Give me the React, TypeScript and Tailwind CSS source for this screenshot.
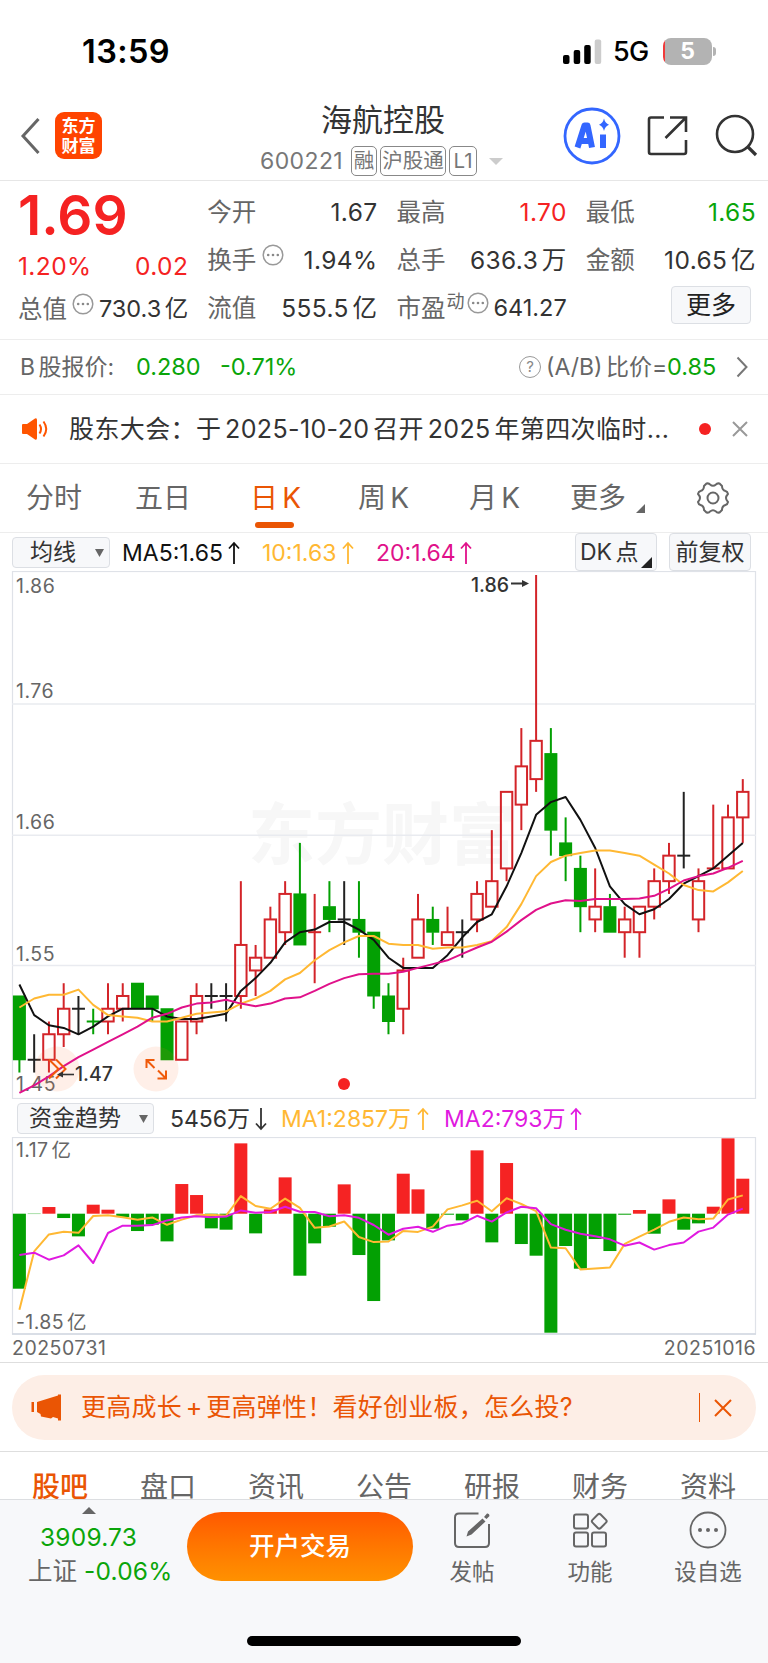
import { Fragment, type ReactNode } from 'react';
import clsx from 'clsx';

type Candle = [open: number, close: number, high: number, low: number, doji?: 'flat' | 'up' | 'down'];

// prices in cents
const candles: Candle[] = [
  [153, 148, 153, 147], [148, 148, 150, 147, 'flat'], [148, 150, 151, 147], [150, 152, 154, 149],
  [152, 152, 153, 150, 'flat'], [151, 151, 152, 150, 'down'], [151, 152, 154, 150], [152, 153, 154, 151],
  [154, 152, 154, 152], [153, 152, 153, 151], [152, 148, 152, 148], [148, 151, 151, 148],
  [151, 153, 154, 150], [153, 153, 154, 152, 'flat'], [153, 153, 154, 151, 'flat'], [153, 157, 162, 152],
  [155, 156, 157, 153], [156, 159, 160, 156], [158, 161, 162, 157], [161, 157, 165, 157],
  [158, 158, 161, 154, 'up'], [160, 159, 162, 158], [159, 159, 162, 157, 'flat'], [159, 158, 162, 156],
  [158, 153, 158, 152], [153, 151, 154, 150], [152, 155, 156, 150], [156, 159, 161, 156],
  [159, 158, 160, 157], [157, 158, 160, 157], [158, 158, 159, 156, 'flat'], [159, 161, 162, 158],
  [160, 162, 166, 160], [163, 169, 169, 162], [168, 171, 174, 166], [170, 173, 186, 169],
  [172, 166, 174, 164], [165, 164, 167, 162], [163, 160, 164, 158], [159, 160, 163, 158],
  [160, 158, 161, 158], [158, 159, 160, 156], [158, 160, 160, 156], [160, 162, 163, 159],
  [162, 164, 165, 161], [164, 164, 169, 163, 'flat'], [159, 162, 163, 158], [163, 163, 168, 163, 'up'],
  [163, 167, 168, 163], [167, 169, 170, 165],
];

// net inflow per day, one unit = 52万
const flows = [
  -225, -1, 20, -13, -68, 27, 12, -10, -52, -33, -83, 89, 56, -44, -48, 211, -59, 13, 109, -186,
  -89, -39, 88, -124, -262, -80, 120, 73, -45, -3, -20, 190, -86, 152, -91, -126, -357, -97, -165, -76,
  -112, -3, 11, -60, 43, -48, -29, 21, 226, 105,
];

// the averages need values from before the first visible day, so each starts with a seed
const ma5Seed = [153.9, 151.5, 150.7, 150.5];
const ma10Seed = [152.1, 152.8, 153.1, 153.1, 153.5, 152.3, 151.5, 151.4, 151.3];
const ma20Seed = [
  145.4, 146, 146.7, 147.5, 148.2, 148.8, 149.4, 150, 150.6, 151.3, 151.6, 152.1, 152.4, 152.5, 152.7,
  152.4, 152.2, 152.4, 152.8,
];
const flow5Seed = [-288, -113, -62, -54];
const flow10Seed = [-124, -117, -138, -125, -95, -148, -58, -36, -36];

const average = (values: number[], seed: number[]) => {
  const n = seed.length + 1;
  return values.map((_, i) =>
    i < seed.length ? seed[i] : values.slice(i - n + 1, i + 1).reduce((a, b) => a + b, 0) / n,
  );
};

const xAt = (i: number) => 19.4 + i * 14.763;
const priceY = (p: number) => 4 + (186 - p) * 12.757;
const flowY = (v: number) => 76.7 - v / 3;
const toPoints = (values: number[], y: (v: number) => number) =>
  values.map((v, i) => `${xAt(i).toFixed(1)},${y(v).toFixed(1)}`).join(' ');

const closes = candles.map((c) => c[1]);

// puts a small gap between Chinese and Latin runs
const Mixed = ({ text }: { text: string }) => (
  <>
    {text.split(/(?<=[\u4e00-\u9fa5])(?=[\w+(])|(?<=[\w+)])(?=[\u4e00-\u9fa5])/).map((run, i) => (
      <Fragment key={i}>{i === 0 ? run : <span className="ml-[0.15em]">{run}</span>}</Fragment>
    ))}
  </>
);

const Line = ({ points, color }: { points: string; color: string }) => (
  <polyline points={points} fill="none" stroke={color} strokeWidth="2" strokeLinejoin="round" />
);

function CandleShape({ candle, index }: { candle: Candle; index: number }) {
  const [open, close, high, low, doji] = candle;
  const x = xAt(index);
  const top = priceY(Math.max(open, close));
  const bottom = priceY(Math.min(open, close));
  const color =
    doji === 'flat' ? '#222' : doji === 'down' || (!doji && close < open) ? '#03a003' : '#d32429';

  if (doji) {
    return (
      <g stroke={color} strokeWidth="2">
        <line x1={x} x2={x} y1={priceY(high)} y2={priceY(low)} />
        <line x1={x - 6.5} x2={x + 6.5} y1={top} y2={top} />
      </g>
    );
  }
  return (
    <g stroke={color} strokeWidth="2">
      <line x1={x} x2={x} y1={priceY(high)} y2={top} />
      <line x1={x} x2={x} y1={bottom} y2={priceY(low)} />
      {close < open ? (
        <rect x={x - 6.5} y={top - 0.5} width="13" height={bottom - top + 1} fill={color} stroke="none" />
      ) : (
        <rect x={x - 5.7} y={top} width="11.4" height={bottom - top} fill="none" />
      )}
    </g>
  );
}

function KChart() {
  return (
    <svg width="768" height="528" viewBox="0 0 768 528" className="block shrink-0">
      <text x="248" y="288" fontSize="67" fontWeight="700" fill="#f7f7f7">东方财富</text>
      <g stroke="#e9ebf0" strokeWidth="1.6">
        <rect x="12.5" y="0.5" width="743" height="527" fill="none" strokeWidth="1.2" stroke="#dfe2e8" />
        <path d="M12 133H756M12 264.2H756M12 394.5H756" />
      </g>
      {candles.map((c, i) => <CandleShape key={i} candle={c} index={i} />)}
      <g fontSize="19.5" fill="#666" letterSpacing="0.5">
        <text x="16" y="22">1.86</text>
        <text x="16" y="126.5">1.76</text>
        <text x="16" y="258">1.66</text>
        <text x="16" y="389.5">1.55</text>
        <text x="16" y="520">1.45</text>
      </g>
      <circle cx="57" cy="498" r="22.5" fill="#ff6a2a" fillOpacity="0.11" />
      <circle cx="156" cy="498" r="22.5" fill="#ff6a2a" fillOpacity="0.11" />
      <Line points={toPoints(average(closes, ma5Seed), priceY)} color="#111" />
      <Line points={toPoints(average(closes, ma10Seed), priceY)} color="#ffb833" />
      <Line points={toPoints(average(closes, ma20Seed), priceY)} color="#e0118a" />
      <g fill="none" stroke="#f05a0a" strokeWidth="2">
        <path d="M49 488.5L58.5 498L49 507.5M56 488.5L65.5 498L56 507.5" />
        <path d="M146.5 497V489H154.5M147 489.5L154.5 497M157.5 507.5H166V499.5M165.5 507L158 499.5" />
      </g>
      <g stroke="#333" strokeWidth="1.6" fill="#333">
        <path d="M59 503.5H74" />
        <path d="M57 503.5L63 500.5V506.5Z" stroke="none" />
        <path d="M511 12.5H524" strokeWidth="2" />
        <path d="M529 12.5L522 9V16Z" stroke="none" />
      </g>
      <g fontSize="19.5" fontWeight="500" fill="#333">
        <text x="75" y="510">1.47</text>
        <text x="471" y="20.5">1.86</text>
      </g>
      <circle cx="344" cy="513" r="6" fill="#f52222" />
    </svg>
  );
}

function FlowChart() {
  return (
    <svg width="768" height="198" viewBox="0 0 768 198" className="block shrink-0">
      <rect x="12.5" y="0.5" width="743" height="196.5" fill="none" stroke="#dfe2e8" strokeWidth="1.2" />
      <path d="M12 197H756" stroke="#d3d8e2" strokeWidth="1.5" />
      {flows.map((v, i) => (
        <rect
          key={i}
          x={xAt(i) - 6.5}
          y={Math.min(flowY(0), flowY(v))}
          width="13"
          height={Math.abs(v) / 3}
          fill={v > 0 ? '#f52323' : '#03a003'}
        />
      ))}
      <Line points={toPoints(average(flows, flow5Seed), flowY)} color="#ffb833" />
      <Line points={toPoints(average(flows, flow10Seed), flowY)} color="#e019e0" />
      <g fontSize="19.5" fill="#666" letterSpacing="0.4">
        <text x="16" y="20">1.17<tspan dx="3">亿</tspan></text>
        <text x="16" y="192">-1.85<tspan dx="3">亿</tspan></text>
      </g>
    </svg>
  );
}

const Arrow = ({ down = false }: { down?: boolean }) => (
  <svg width="12" height="24" viewBox="0 0 12 24" fill="none" stroke="currentColor" strokeWidth="1.8" className={clsx('shrink-0', down && 'rotate-180')}>
    <path d="M6 23V2M1 7.5L6 2L11 7.5" />
  </svg>
);

const Dots = ({ className }: { className?: string }) => (
  <svg width="22" height="22" viewBox="0 0 22 22" className={clsx('shrink-0', className)}>
    <circle cx="11" cy="11" r="9.8" fill="none" stroke="#999" strokeWidth="1.5" />
    <g fill="#888">
      <circle cx="6.2" cy="11" r="1.3" />
      <circle cx="11" cy="11" r="1.3" />
      <circle cx="15.8" cy="11" r="1.3" />
    </g>
  </svg>
);

function StatusBar() {
  return (
    <div className="flex h-[103px] shrink-0 items-center pr-[52px] pl-[82px] text-black">
      <span className="mt-[2px] text-[32.5px] font-semibold tracking-[0.4px]">13:59</span>
      <svg width="40" height="26" viewBox="0 0 40 26" className="ml-auto">
        <rect x="0" y="16" width="6.5" height="9" rx="2" />
        <rect x="10.7" y="11" width="6.5" height="14" rx="2" />
        <rect x="21.2" y="6" width="6.5" height="19" rx="2" />
        <rect x="31.7" y="0.5" width="6.5" height="24.5" rx="2" fill="#ccc" />
      </svg>
      <span className="mt-[2px] ml-[10px] w-[38px] text-[27px] font-medium tracking-[-0.8px]">5G</span>
      <div className="ml-[12px] flex h-[27px] w-[49px] items-center justify-center rounded-[8px] bg-[linear-gradient(90deg,#f03a3a_2.5px,#b3b3b3_2.5px)] text-[23px] font-bold text-white">5</div>
      <div className="ml-[1px] h-[9px] w-[3px] rounded-r-full bg-[#b3b3b3]" />
    </div>
  );
}

const Tag = ({ children, className }: { children: ReactNode; className: string }) => (
  <span className={clsx('flex h-[30px] shrink-0 items-center justify-center rounded-[5px] border-[1.5px] border-[#888] text-[20.5px]', className)}>
    {children}
  </span>
);

function Header() {
  return (
    <header className="flex h-[78px] shrink-0 border-b border-[#e6e6e6]">
      <svg width="20" height="38" viewBox="0 0 20 38" fill="none" stroke="#666" strokeWidth="3" className="mt-[14px] ml-[20px]">
        <path d="M18.5 2L3 19L18.5 36" />
      </svg>
      <div className="mt-[9px] ml-[15px] flex h-[47px] w-[47px] flex-col items-center justify-center rounded-[9px] bg-[#ff4400] text-[17px] leading-[20px] font-bold text-white">
        <span>东方</span>
        <span>财富</span>
      </div>
      <div className="ml-[158px] flex w-[246px] flex-col">
        <span className="mt-[-3px] pl-[61px] text-[31px] leading-[40px] text-[#333]">海航控股</span>
        <div className="mt-[4px] flex items-center text-[#777]">
          <span className="w-[91px] shrink-0 text-[23px] tracking-[0.4px]">600221</span>
          <Tag className="w-[26px]">融</Tag>
          <Tag className="ml-[3px] w-[66px]">沪股通</Tag>
          <Tag className="ml-[3px] w-[28px]">L1</Tag>
          <svg width="14" height="7" className="ml-[12px] shrink-0" fill="#ccc"><path d="M0 0H14L7 7Z" /></svg>
        </div>
      </div>
      <svg width="60" height="60" viewBox="0 0 60 60" className="mt-[3px] ml-[56px]">
        <circle cx="30" cy="30" r="27" fill="none" stroke="#3366ff" strokeWidth="2.8" />
        <g fill="none" stroke="#3366ff" strokeWidth="6" strokeLinejoin="round">
          <path d="M15.5 41.5L22.5 19.5H25.5L30 41.5M19.5 35H28" />
          <path d="M41 28.5V42" />
        </g>
        <path d="M42 12.5Q43.2 17.5 47 18.7Q43.2 20 42 25Q40.8 20 37 18.7Q40.8 17.5 42 12.5Z" fill="#3366ff" />
      </svg>
      <svg width="42" height="42" viewBox="0 0 42 42" fill="none" stroke="#333" strokeWidth="2.6" className="mt-[12px] ml-[24px]">
        <path d="M18 2.5H5Q3 2.5 3 4.5V37Q3 39 5 39H38Q40 39 40 37V25M24 2.5H40V17M40 2.5L19.5 23" />
      </svg>
      <svg width="44" height="44" viewBox="0 0 44 44" fill="none" stroke="#333" strokeWidth="2.6" className="mt-[11px] ml-[27px]">
        <circle cx="20" cy="20" r="18" />
        <path d="M33 33L41 41" strokeWidth="3.2" />
      </svg>
    </header>
  );
}

const Cell = ({ label, value, color, note }: { label: string; value: string; color?: string; note?: ReactNode }) => (
  <div className="flex h-[48px] items-center">
    <span className="shrink-0 text-[24.5px] text-[#666]">{label}</span>
    {note}
    <span className={clsx('mr-[-1px] ml-auto whitespace-nowrap', note && !value.includes('%') ? 'text-[23.5px]' : 'text-[24.5px] tracking-[0.4px]', color)}>
      <Mixed text={value} />
    </span>
  </div>
);

function Quote() {
  return (
    <section className="grid h-[159px] shrink-0 grid-cols-4 gap-x-[20px] border-b border-[#ededed] pt-[7px] pr-[13px] pl-[18px] text-[#333]">
      <div>
        <div className="h-[54px] text-[55px] leading-[55px] font-semibold text-[#f52222]">1.69</div>
        <div className="mr-[-1px] flex h-[43px] items-end justify-between text-[24.5px] tracking-[0.4px] text-[#f52222]">
          <span>1.20%</span>
          <span>0.02</span>
        </div>
        <Cell label="总值" value="730.3亿" note={<Dots className="mb-[10px] ml-[5px]" />} />
      </div>
      <div>
        <Cell label="今开" value="1.67" />
        <Cell label="换手" value="1.94%" note={<Dots className="mb-[10px] ml-[6px]" />} />
        <Cell label="流值" value="555.5亿" />
      </div>
      <div>
        <Cell label="最高" value="1.70" color="text-[#f52222]" />
        <Cell label="总手" value="636.3万" />
        <Cell
          label="市盈"
          value="641.27"
          note={<><span className="mb-[14px] ml-[1px] text-[18px] text-[#666]">动</span><Dots className="mb-[10px] ml-[2px]" /></>}
        />
      </div>
      <div>
        <Cell label="最低" value="1.65" color="text-[#0aa50a]" />
        <Cell label="金额" value="10.65亿" />
        <div className="mt-[2px] mr-[4px] ml-auto flex h-[38px] w-[80px] items-center justify-center rounded-[4px] border-[1.5px] border-[#dcdfe4] bg-[#f7f8fa] pt-[2px] text-[25px] text-[#222]">更多</div>
      </div>
    </section>
  );
}

function BShareRow() {
  return (
    <div className="flex h-[55px] shrink-0 items-center border-b border-[#ededed] pr-[20px] pl-[20px] text-[23px] whitespace-nowrap text-[#666]">
      <span className="w-[116px]"><Mixed text="B股报价:" /></span>
      <span className="w-[84px] text-[23.5px] text-[#0aa50a]">0.280</span>
      <span className="text-[23.5px] text-[#0aa50a]">-0.71%</span>
      <span className="ml-auto flex size-[22px] items-center justify-center rounded-full border-[1.5px] border-[#999] text-[15px] text-[#888]">?</span>
      <span className="ml-[5px] w-[121px]"><Mixed text="(A/B)比价=" /></span>
      <span className="w-[49px] text-[23.5px] text-[#0aa50a]">0.85</span>
      <svg width="12" height="22" viewBox="0 0 12 22" fill="none" stroke="#777" strokeWidth="2" className="ml-[20px]"><path d="M1.5 1.5L10.5 11L1.5 20.5" /></svg>
    </div>
  );
}

function Notice() {
  return (
    <div className="flex h-[69px] shrink-0 items-center border-b border-[#ededed] pr-[20px] pl-[22px] text-[25px] text-[#333]">
      <svg width="27" height="22" viewBox="0 0 27 22" className="shrink-0">
        <path d="M0 7Q0 6 1 6H5L13 0.5Q15 -0.5 15 2V20Q15 22.5 13 21.5L5 16H1Q0 16 0 15Z" fill="#ff5500" />
        <path d="M17.5 6.5Q20.5 11 17.5 15.5M21.5 3.5Q27 11 21.5 18.5" fill="none" stroke="#ff5500" strokeWidth="2" />
      </svg>
      <span className="mt-[1px] ml-[20px] w-[604px] shrink-0 tracking-[0.38px] whitespace-nowrap">
        <Mixed text="股东大会：于2025-10-20召开2025年第四次临时..." />
      </span>
      <span className="ml-[26px] size-[12px] shrink-0 rounded-full bg-[#f52222]" />
      <svg width="16" height="16" viewBox="0 0 16 16" stroke="#999" strokeWidth="2" className="ml-auto shrink-0"><path d="M1 1L15 15M15 1L1 15" /></svg>
    </div>
  );
}

const periods = [
  { label: '分时', width: 'w-[109px]' },
  { label: '五日', width: 'w-[115px]' },
  { label: '日K', width: 'w-[108px]', active: true },
  { label: '周K', width: 'w-[111px]' },
  { label: '月K', width: 'w-[101px]' },
  { label: '更多', width: 'w-[66px]' },
];

function PeriodTabs() {
  return (
    <nav className="flex h-[69px] shrink-0 items-center border-b border-[#ededed] pl-[26px] text-[28px] whitespace-nowrap text-[#666]">
      {periods.map(({ label, width, active }) => (
        <span key={label} className={clsx('relative shrink-0', width, active && 'text-[#ea5504]')}>
          <Mixed text={label} />
          {active && <i className="absolute top-[45px] left-[5px] h-[6px] w-[39px] rounded-full bg-[#ea5504]" />}
        </span>
      ))}
      <svg width="9" height="9" fill="#666" className="mt-[20px]"><path d="M9 0V9H0Z" /></svg>
      <svg width="34" height="32" viewBox="0 0 34 32" fill="none" stroke="#666" strokeWidth="2" className="mb-[1px] ml-[51px]">
        <path d="M10.5 1.5Q13 1 14 2.5Q17 5 20 2.5Q21 1 23.5 1.5L26 4Q26 8 29.5 9Q31.5 9.5 32 12Q30 14 30 16Q30 18 32 20Q31.5 22.5 29.5 23Q26 24 26 28L23.5 30.5Q21 31 20 29.5Q17 27 14 29.5Q13 31 10.5 30.5L8 28Q8 24 4.5 23Q2.5 22.5 2 20Q4 18 4 16Q4 14 2 12Q2.5 9.5 4.5 9Q8 8 8 4Z" strokeLinejoin="round" />
        <circle cx="17" cy="16" r="5.5" />
      </svg>
    </nav>
  );
}

const boxed = 'flex shrink-0 items-center rounded-[4px] border-[1.5px] border-[#dcdfe4] bg-[#f7f8fa] text-[#333]';

function ChartToolbar() {
  return (
    <div className="flex h-[38px] shrink-0 items-center pl-[12px] text-[23px] whitespace-nowrap">
      <div className={clsx(boxed, 'h-[31px] w-[98px] pt-[1px] pl-[17px]')}>
        均线
        <svg width="9" height="8" fill="#666" className="ml-[19px]"><path d="M0 0H9L4.5 8Z" /></svg>
      </div>
      <span className="ml-[12px] flex w-[140px] items-center justify-between pt-[2px] pr-[22px] text-[#111]">MA5:1.65<Arrow /></span>
      <span className="flex w-[114px] items-center justify-between pt-[2px] pr-[22px] text-[#ffb833]">10:1.63<Arrow /></span>
      <span className="flex w-[96px] items-center justify-between pt-[2px] text-[#e0118a]">20:1.64<Arrow /></span>
      <div className={clsx(boxed, 'relative ml-auto h-[38px] w-[82px] pt-[1px] pl-[4px]')}>
        <span><Mixed text="DK点" /></span>
        <svg width="11" height="11" fill="#222" className="absolute right-[4px] bottom-[2px]"><path d="M11 0V11H0Z" /></svg>
      </div>
      <div className={clsx(boxed, 'mr-[17px] ml-[12px] h-[38px] w-[82px] justify-center pt-[1px]')}>前复权</div>
    </div>
  );
}

function FlowToolbar() {
  return (
    <div className="flex h-[38px] shrink-0 items-center pl-[17px] text-[23px] whitespace-nowrap">
      <div className={clsx(boxed, 'h-[31px] w-[137px] pt-[1px] pl-[11px]')}>
        资金趋势
        <svg width="9" height="8" fill="#666" className="ml-[18px]"><path d="M0 0H9L4.5 8Z" /></svg>
      </div>
      <span className="ml-[16px] flex w-[97px] items-center justify-between pt-[2px] text-[#333]">5456万<Arrow down /></span>
      <span className="ml-[14px] flex w-[148px] items-center justify-between pt-[2px] text-[#ffb833]">MA1:2857万<Arrow /></span>
      <span className="ml-[15px] flex w-[138px] items-center justify-between pt-[2px] text-[#e019e0]">MA2:793万<Arrow /></span>
    </div>
  );
}

function Banner() {
  return (
    <div className="h-[89px] shrink-0 border-b border-[#dedede] px-[12px] pt-[12px]">
      <div className="flex h-[65px] items-center rounded-full bg-[#fdeee6] pr-[24px] pl-[19px] text-[25px] text-[#ea5504]">
        <svg width="31" height="27" viewBox="0 0 31 27" fill="#ea5504">
          <path d="M0.5 8H3V18H0.5ZM6 8L27 1.5V0.5H30V26.5H27V24.5L22 23L20 24.5L10 22.5L9.5 20L6 18Z" />
        </svg>
        <span className="mt-[1px] ml-[19px] tracking-[0.25px] whitespace-nowrap"><Mixed text="更高成长+更高弹性！看好创业板，怎么投?" /></span>
        <i className="ml-auto h-[29px] w-[1.5px] bg-[#ea5504]" />
        <svg width="18" height="18" viewBox="0 0 18 18" stroke="#ea5504" strokeWidth="2" className="ml-[14px]"><path d="M1 1L17 17M17 1L1 17" /></svg>
      </div>
    </div>
  );
}

const sections = ['股吧', '盘口', '资讯', '公告', '研报', '财务', '资料'];

function BottomBar() {
  return (
    <footer className="h-[164px] shrink-0 border-t border-[#dcdee1] bg-[#f7f8fa] text-[#666]">
      <div className="flex h-[88px]">
        <div className="ml-[28px] flex w-[159px] flex-col whitespace-nowrap">
          <svg width="14" height="7" fill="#666" className="mt-[7px] ml-[54px] shrink-0"><path d="M0 7H14L7 0Z" /></svg>
          <span className="mt-[6px] ml-[12px] text-[24.5px] leading-[34px] tracking-[0.2px] text-[#0aa50a]">3909.73</span>
          <span className="flex text-[24.5px] leading-[34px]"><span className="w-[56px]">上证</span><span className="tracking-[0.2px] text-[#0aa50a]">-0.06%</span></span>
        </div>
        <button className="mt-[12px] h-[69px] w-[226px] rounded-full bg-linear-to-b from-[#ff5800] to-[#ff9100] text-[25.5px] font-medium text-white">开户交易</button>
        <div className="grid grid-cols-[118px_118px_118px] text-[22.5px]">
          <div className="flex flex-col items-center">
            <svg width="36" height="36" viewBox="0 0 36 36" fill="none" stroke="#666" strokeWidth="2" className="mt-[12px] mb-[7px]">
              <path d="M24.5 1.5H5Q1 1.5 1 5.5V31Q1 35 5 35H31Q35 35 35 31V12" />
              <path d="M12.5 24.5L14 19.5L28.5 6.5L31.5 9.5L17.5 22.5ZM30 5L33 1.5Q35.5 1 35.5 4L32.5 7Z" fill="#666" stroke="none" />
            </svg>
            发帖
          </div>
          <div className="flex flex-col items-center">
            <svg width="36" height="36" viewBox="0 0 36 36" fill="none" stroke="#666" strokeWidth="2" className="mt-[12px] mb-[7px]">
              <rect x="2" y="2.5" width="14" height="14" rx="2" />
              <rect x="2" y="20.5" width="14" height="14" rx="2" />
              <rect x="20" y="20.5" width="14" height="14" rx="2" />
              <rect x="21.5" y="3.5" width="11.5" height="11.5" rx="2" transform="rotate(45 27.25 9.25)" />
            </svg>
            功能
          </div>
          <div className="flex flex-col items-center">
            <svg width="38" height="38" viewBox="0 0 38 38" className="mt-[11px] mb-[6px]" fill="#666">
              <circle cx="19" cy="19" r="17.5" fill="none" stroke="#666" strokeWidth="1.8" />
              <circle cx="11" cy="19" r="2" />
              <circle cx="19" cy="19" r="2" />
              <circle cx="27" cy="19" r="2" />
            </svg>
            设自选
          </div>
        </div>
      </div>
      <div className="mx-auto mt-[48px] h-[10px] w-[274px] rounded-full bg-black" />
    </footer>
  );
}

export default function App() {
  return (
    <main className="flex h-[1663px] w-[768px] flex-col overflow-hidden bg-white font-['Inter','Noto_Sans_CJK_SC',sans-serif]">
      <StatusBar />
      <Header />
      <Quote />
      <BShareRow />
      <Notice />
      <PeriodTabs />
      <ChartToolbar />
      <KChart />
      <FlowToolbar />
      <FlowChart />
      <div className="flex h-[28px] shrink-0 justify-between border-b border-[#dedede] px-[12px] text-[19.5px] leading-[26px] tracking-[0.5px] text-[#666]">
        <span>20250731</span>
        <span>20251016</span>
      </div>
      <Banner />
      <div className="flex h-[47px] shrink-0 overflow-hidden px-[6px] text-[28px] leading-[71px] text-[#666]">
        {sections.map((name, i) => (
          <span key={name} className={clsx('w-[108px] text-center', i === 0 && 'font-medium text-[#ea5504]')}>{name}</span>
        ))}
      </div>
      <BottomBar />
    </main>
  );
}
